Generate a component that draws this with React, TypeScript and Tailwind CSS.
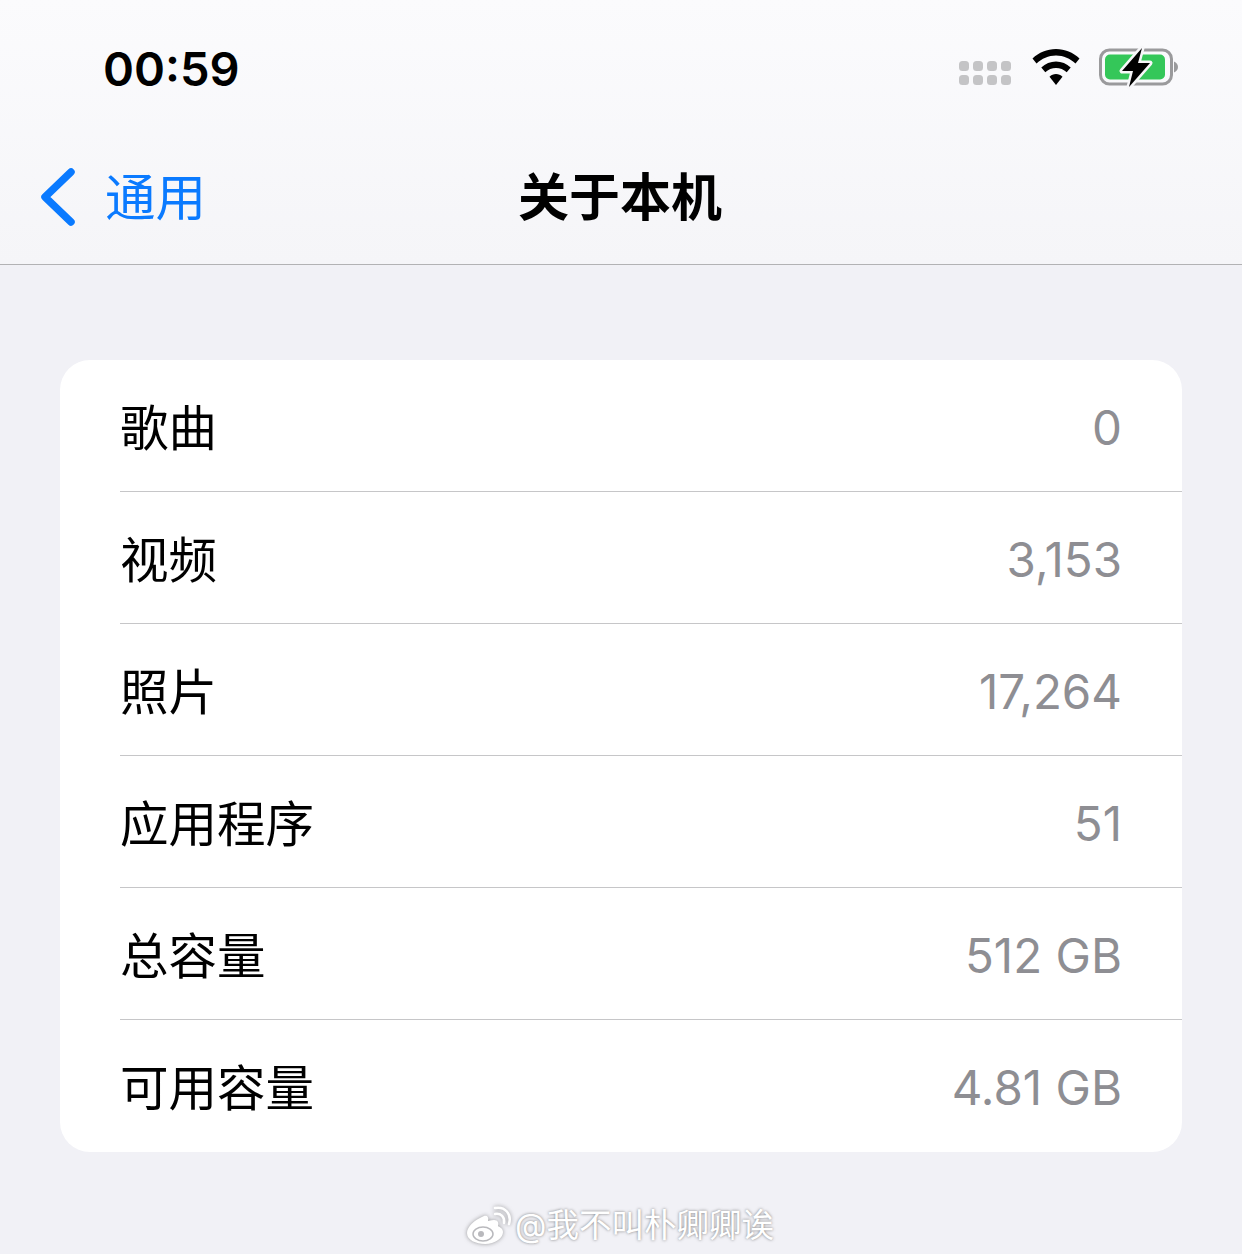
const rows = [
  { label: "歌曲", value: "0" },
  { label: "视频", value: "3,153" },
  { label: "照片", value: "17,264" },
  { label: "应用程序", value: "51" },
  { label: "总容量", value: "512 GB" },
  { label: "可用容量", value: "4.81 GB" },
];

function CellDots() {
  return (
    <svg width="52" height="26" viewBox="0 0 52 26" fill="#c4c4c6">
      {[0, 14, 28, 42].map((x) => (
        <g key={x}>
          <rect x={x} y="0" width="10" height="10" rx="3.500" />
          <rect x={x} y="14" width="10" height="10" rx="3.500" />
        </g>
      ))}
    </svg>
  );
}

function Wifi() {
  return (
    <svg width="48" height="38" viewBox="0 0 48 38" fill="#000">
      <path d="M24 0C15 0 7 3.500 0.500 9.500L4.500 14.500C9.800 9.500 16.500 6.500 24 6.500C31.500 6.500 38.200 9.500 43.500 14.500L47.500 9.500C41 3.500 33 0 24 0Z" />
      <path d="M24 12.500C18.500 12.500 13.300 14.700 9.300 18.500L13.300 23.300C16.200 20.500 20 19 24 19C28 19 31.800 20.500 34.700 23.300L38.700 18.500C34.700 14.700 29.500 12.500 24 12.500Z" />
      <path d="M24 25C21.500 25 19.300 26 17.500 27.700L24 36L30.500 27.700C28.700 26 26.500 25 24 25Z" />
    </svg>
  );
}

function Battery() {
  return (
    <svg width="80" height="40" viewBox="0 0 80 40" className="overflow-visible">
      <rect x="1.500" y="3" width="71" height="34" rx="9" fill="none" stroke="#9a9a9c" strokeWidth="3" />
      <rect x="6" y="7.500" width="60" height="25" rx="5" fill="#34c759" />
      <path d="M75 14.500C77.500 15.500 79 17.500 79 20C79 22.500 77.500 24.500 75 25.500Z" fill="#9a9a9c" />
      <path
        d="M43 1L23 24H34L30 40L51 16H39Z"
        fill="#000"
        stroke="#f7f7f9"
        strokeWidth="5"
        strokeLinejoin="round"
        paintOrder="stroke"
      />
    </svg>
  );
}

function WeiboLogo() {
  return (
    <svg width="46" height="40" viewBox="0 0 46 40" className="drop-shadow-[0_0_2px_rgba(90,90,90,0.6)]">
      <path
        d="M18 10C8 14 1 21 1 27C1 34 10 38 19 38C29 38 37 32 37 26C37 22 33 21 32 20C33 17 32 14 28 14C25 14 23 15 22 15C23 11 21 9 18 10Z"
        fill="#fff"
      />
      <ellipse cx="17" cy="28" rx="10" ry="7" fill="none" stroke="#b9b9bd" strokeWidth="1.500" />
      <circle cx="15" cy="28" r="3" fill="#b9b9bd" />
      <path d="M29 8C35 7 39 11 38 17" fill="none" stroke="#fff" strokeWidth="2.500" strokeLinecap="round" />
      <path d="M29 2C39 0 46 8 43 18" fill="none" stroke="#fff" strokeWidth="2.500" strokeLinecap="round" />
    </svg>
  );
}

export default function App() {
  return (
    <div className="w-[1242px] h-[1254px] overflow-hidden bg-[#f1f1f6] font-['Inter','Noto_Sans_CJK_SC',sans-serif]">
      <header className="h-[265px] border-b border-[#b2b2b4] bg-gradient-to-b from-[#fbfbfd] to-[#f5f5f8]">
        <div className="flex h-[134px] items-center justify-between pl-[103px] pr-[63px]">
          <span className="pt-[2px] text-[47px] font-semibold leading-none text-black">00:59</span>
          <div className="flex items-center">
            <div className="mt-[14px] mr-[1px]">
              <CellDots />
            </div>
            <div className="ml-[20px] mt-[1px]">
              <Wifi />
            </div>
            <div className="ml-[19px]">
              <Battery />
            </div>
          </div>
        </div>
        <div className="relative flex h-[130px] items-center justify-center pb-[4px] pr-[2px]">
          <div className="absolute left-[40px] top-[34px] flex items-center">
            <svg width="36" height="58" viewBox="0 0 36 58" fill="none">
              <path d="M31 4L5 29L31 54" stroke="#0a7aff" strokeWidth="7.500" strokeLinecap="round" strokeLinejoin="round" />
            </svg>
            <span className="ml-[29px] pt-[2px] text-[50.500px] leading-none text-[#0a7aff]">通用</span>
          </div>
          <h1 className="text-[51px] font-semibold leading-none text-black">关于本机</h1>
        </div>
      </header>

      <main className="ml-[60px] mr-[60px] mt-[95px] overflow-hidden rounded-[30px] bg-white">
        {rows.map((row, i) => (
          <div key={row.label} className="pl-[60px]">
            <div
              className={
                i === rows.length - 1
                  ? "flex h-[132px] items-center justify-between pt-[4px] pr-[60px]"
                  : "flex h-[132px] items-center justify-between border-b border-[#c6c6c8] pt-[4px] pr-[60px]"
              }
            >
              <span className="pt-[3px] text-[48.500px] leading-none text-black">{row.label}</span>
              <span className="text-[47.500px] leading-none text-[#8e8e93]">{row.value}</span>
            </div>
          </div>
        ))}
      </main>

      <footer className="mt-[54px] flex items-center justify-center gap-[3px] pr-[2px]">
        <WeiboLogo />
        <span className="text-[32.500px] leading-none text-white [text-shadow:0_0_3px_rgba(80,80,80,0.75)]">
          @我不叫朴卿卿诶
        </span>
      </footer>
    </div>
  );
}
